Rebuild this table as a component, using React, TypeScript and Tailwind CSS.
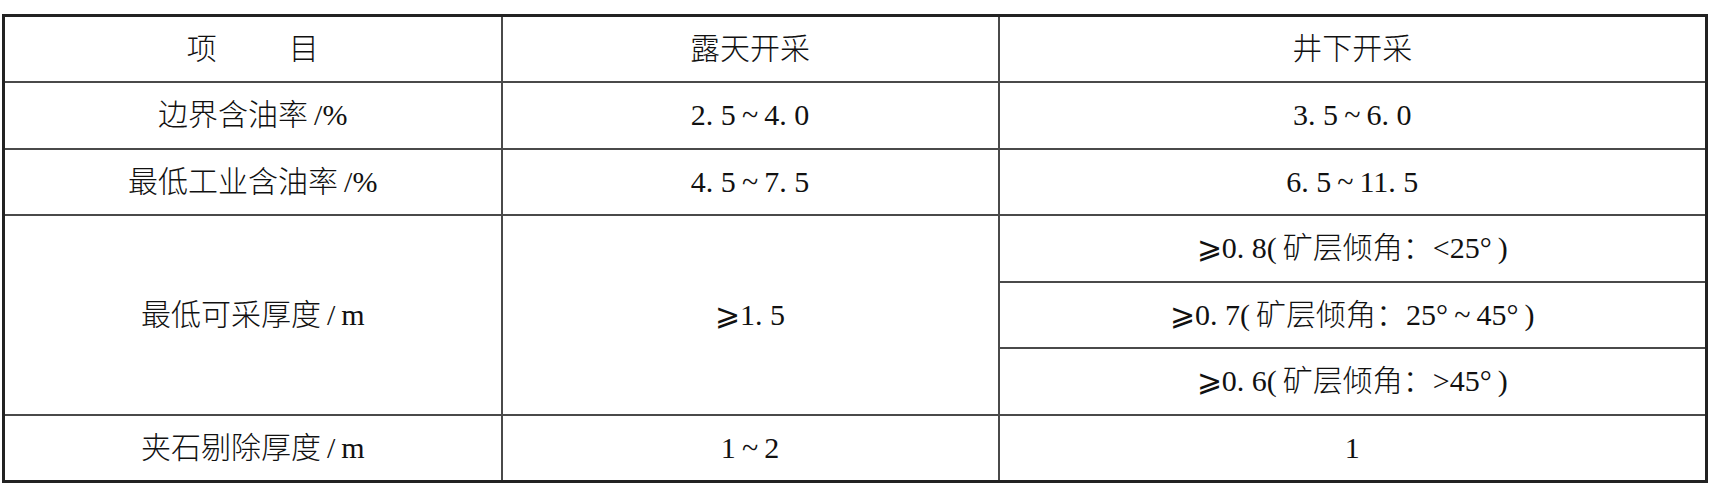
const font = { fontFamily: '"Liberation Serif", "Noto Sans CJK SC", serif' };

const cell = "border-2 border-[#4a4a4a] text-center align-middle text-[30px] leading-none text-[#111] font-light h-[66.5px] p-0";

// thin space used around tildes, slashes and brackets, as in the typeset original
const t = "\u2009";

export default function App() {
  return (
    <div className="w-[1718px] h-[487px] bg-white pt-[14px] pl-[2px]" style={font}>
      <table className="border-collapse border-[3px] border-[#222] w-[1706px] table-fixed">
        <colgroup>
          <col className="w-[498px]" />
          <col className="w-[497px]" />
          <col />
        </colgroup>
        <tbody>
          <tr>
            <td className={cell}>
              <span className="inline-flex gap-[72px]">
                <span>项</span>
                <span>目</span>
              </span>
            </td>
            <td className={cell}>露天开采</td>
            <td className={cell}>井下开采</td>
          </tr>
          <tr>
            <td className={cell}>边界含油率{t}/%</td>
            <td className={cell}>2. 5{t}~{t}4. 0</td>
            <td className={cell}>3. 5{t}~{t}6. 0</td>
          </tr>
          <tr>
            <td className={cell}>最低工业含油率{t}/%</td>
            <td className={cell}>4. 5{t}~{t}7. 5</td>
            <td className={cell}>6. 5{t}~{t}11. 5</td>
          </tr>
          <tr>
            <td className={cell} rowSpan={3}>最低可采厚度{t}/{t}m</td>
            <td className={cell} rowSpan={3}>⩾1. 5</td>
            <td className={cell}>⩾0. 8({t}矿层倾角：&lt;25°{t})</td>
          </tr>
          <tr>
            <td className={cell}>⩾0. 7({t}矿层倾角：25°{t}~{t}45°{t})</td>
          </tr>
          <tr>
            <td className={cell}>⩾0. 6({t}矿层倾角：&gt;45°{t})</td>
          </tr>
          <tr>
            <td className={cell}>夹石剔除厚度{t}/{t}m</td>
            <td className={cell}>1{t}~{t}2</td>
            <td className={cell}>1</td>
          </tr>
        </tbody>
      </table>
    </div>
  );
}
